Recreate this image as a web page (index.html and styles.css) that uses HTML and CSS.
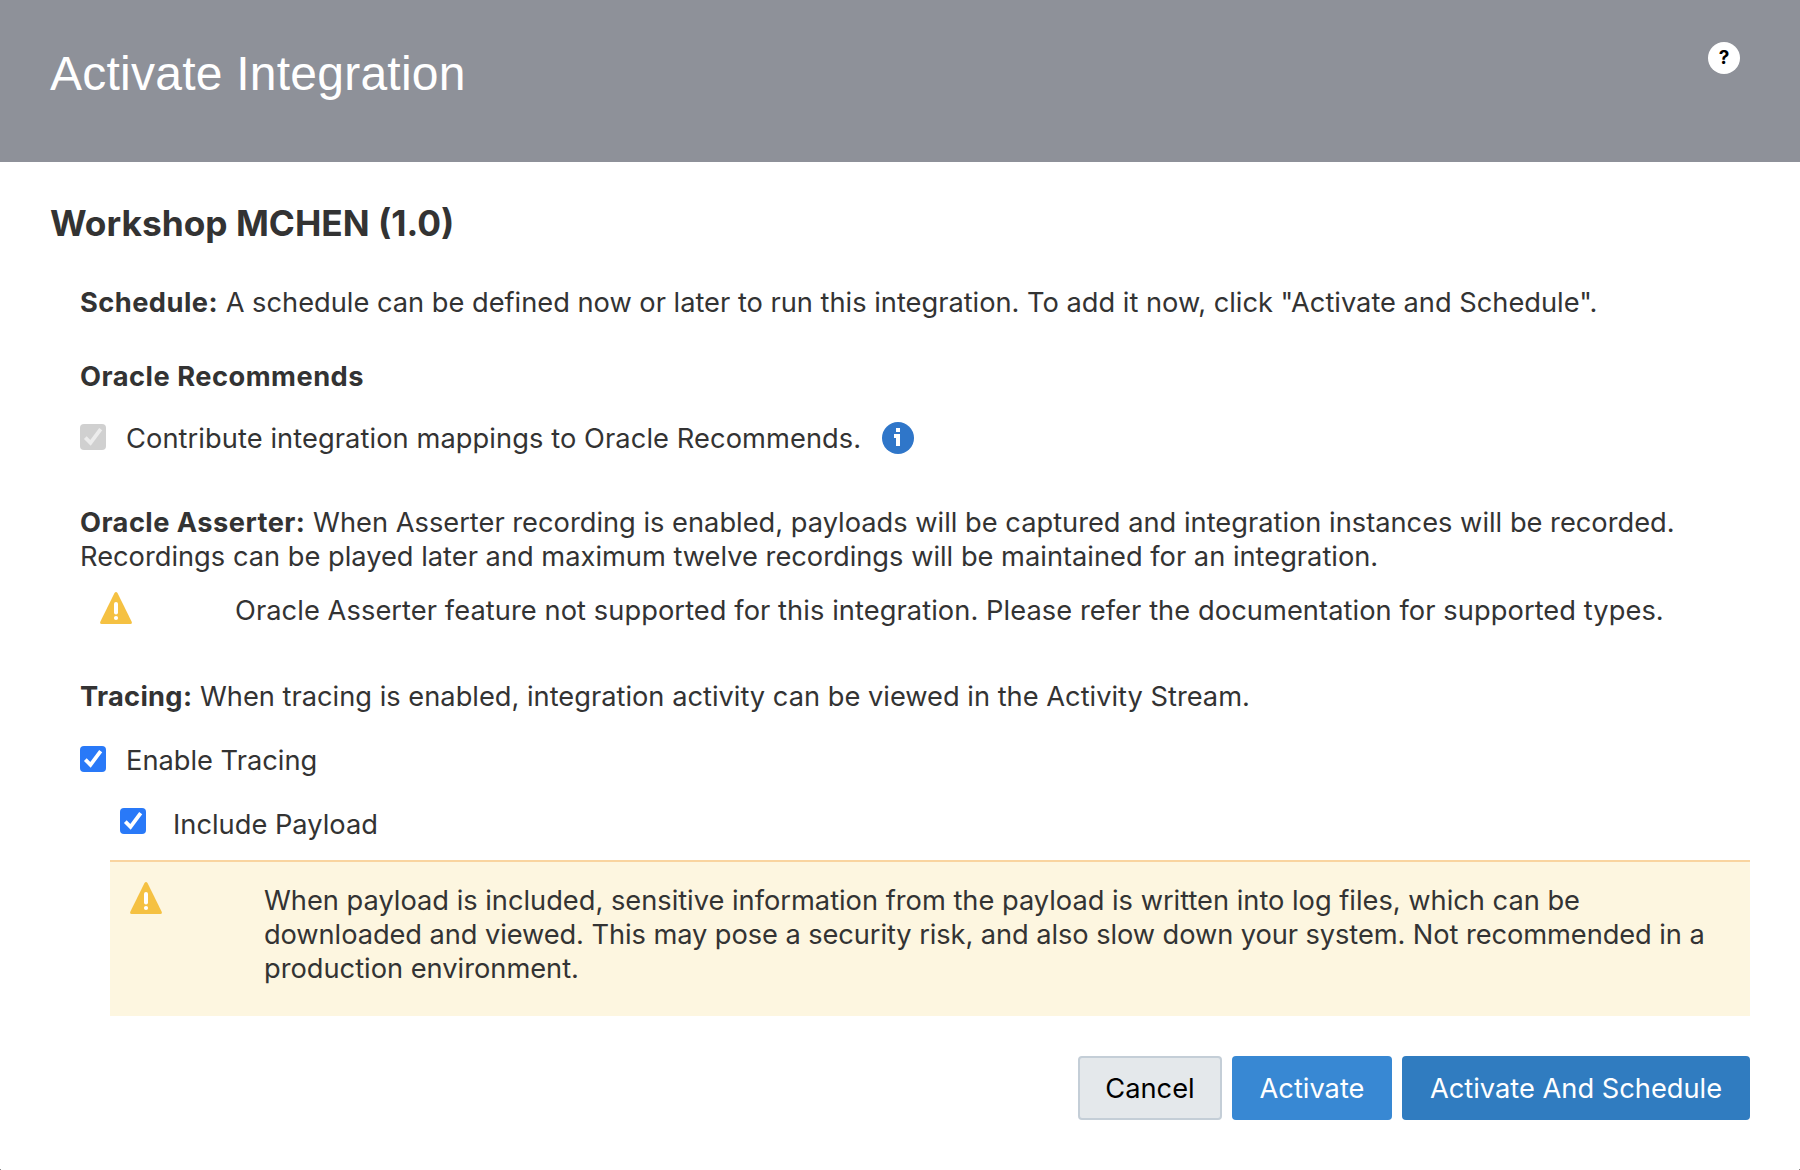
FILE: index.html
```html
<!DOCTYPE html>
<html lang="en">
<head>
<meta charset="utf-8">
<title>Activate Integration</title>
<link rel="stylesheet" href="styles.css">
</head>
<body>
<svg class="defs" width="0" height="0" aria-hidden="true">
  <symbol id="warning" viewBox="0 0 32 32">
    <path fill="#f5c142" d="M14.5 1Q16 -1 17.5 1L31.7 29.7Q32.4 32 30.4 32H1.6Q-.4 32 .3 29.7Z"/>
    <rect class="mark" x="14" y="10" width="4" height="12.4" rx="2"/>
    <circle class="mark" cx="16" cy="26" r="2.1"/>
  </symbol>
  <symbol id="check" viewBox="0 0 26 26">
    <path fill="none" stroke="currentColor" stroke-width="3.8" d="M5.3 13.6L10.5 18.8L20.7 5.2"/>
  </symbol>
</svg>
<main class="dialog">
  <header class="dialog-header">
    <h1 class="title">Activate Integration</h1>
    <button class="help" aria-label="Help">?</button>
  </header>
  <section class="content">
    <h2 class="name">Workshop MCHEN (1.0)</h2>
    <p class="text schedule"><b>Schedule:</b> A schedule can be defined now or later to run this integration. To add it now, click "Activate and Schedule".</p>
    <h3 class="text recommends">Oracle Recommends</h3>
    <div class="option contribute">
      <svg class="checkbox disabled"><use href="#check"/></svg>
      <span class="text">Contribute integration mappings to Oracle Recommends.</span>
      <svg class="info" viewBox="0 0 32 32"><circle cx="16" cy="16" r="16" fill="#2f76c9"/><path fill="#fff" d="M14 6h4v4h-4zM12 12h6v12h-4v-8h-2z"/></svg>
    </div>
    <p class="text asserter"><b>Oracle Asserter:</b> When Asserter recording is enabled, payloads will be captured and integration instances will be recorded.<br>Recordings can be played later and maximum twelve recordings will be maintained for an integration.</p>
    <div class="notice">
      <svg class="warning"><use href="#warning"/></svg>
      <p class="text">Oracle Asserter feature not supported for this integration. Please refer the documentation for supported types.</p>
    </div>
    <p class="text tracing"><b>Tracing:</b> When tracing is enabled, integration activity can be viewed in the Activity Stream.</p>
    <div class="option enable">
      <svg class="checkbox"><use href="#check"/></svg>
      <span class="text">Enable Tracing</span>
    </div>
    <div class="option payload">
      <svg class="checkbox"><use href="#check"/></svg>
      <span class="text">Include Payload</span>
    </div>
    <div class="alert">
      <svg class="warning"><use href="#warning"/></svg>
      <p class="text">When payload is included, sensitive information from the payload is written into log files, which can be<br><span class="tight">downloaded and viewed. This may pose a security risk, and also slow down your system. Not recommended in a</span><br>production environment.</p>
    </div>
  </section>
  <footer class="actions">
    <button class="btn cancel">Cancel</button>
    <button class="btn activate">Activate</button>
    <button class="btn primary">Activate And Schedule</button>
  </footer>
</main>
</body>
</html>
```
FILE: styles.css
```css
* { box-sizing: border-box; margin: 0; padding: 0; }
body { background: #fff; color: #333; font-family: Inter, "Liberation Sans", sans-serif; }
svg { display: block; flex: none; }
.defs { position: absolute; }
.dialog {
  height: 1170px; overflow: hidden;
  background:
    linear-gradient(#888, #888) left bottom / 1px 1px no-repeat,
    linear-gradient(#888, #888) right bottom / 1px 1px no-repeat;
}
.dialog-header {
  display: flex; justify-content: space-between; align-items: flex-start;
  height: 162px; padding: 42px 60px 0 50px; background: #8e9199; color: #fff;
}
.title { font: 400 48px/64px "Liberation Sans", Arial, sans-serif; letter-spacing: .24px; white-space: nowrap; }
.help {
  width: 32px; height: 32px; border: 0; border-radius: 50%; background: #fff; color: #000;
  font: 700 19px/32px Inter, sans-serif;
}
.content { padding: 0 50px 0 80px; }
.name { margin: 40px 0 0 -30px; font-size: 35.3px; line-height: 44px; font-weight: 700; white-space: nowrap; }
.text { font-size: 27.25px; line-height: 34px; white-space: nowrap; }
.text b { letter-spacing: .45px; }
.schedule { margin-top: 40px; letter-spacing: -.01px; }
.recommends { margin-top: 40px; font-weight: 700; letter-spacing: .5px; }
.option { display: flex; gap: 20px; height: 34px; }
.checkbox { width: 26px; height: 26px; border-radius: 4px; background: #2979f8; color: #fff; }
.checkbox.disabled { background: #d0d0d0; color: #ececec; }
.contribute { margin-top: 28px; letter-spacing: .08px; }
.contribute .checkbox { margin-top: 2px; }
.info { width: 32px; height: 32px; margin-left: 1px; }
.asserter { margin-top: 50px; }
.notice { display: flex; gap: 103px; margin-top: 20px; padding-left: 20px; letter-spacing: .07px; }
.warning { width: 32px; height: 32px; }
.mark { fill: #fff; }
.notice .warning { margin-top: -2px; }
.tracing { margin-top: 52px; }
.tracing b { letter-spacing: .3px; }
.enable { margin-top: 30px; }
.enable .checkbox { margin-top: 2px; }
.payload { margin-top: 30px; margin-left: 40px; gap: 27px; }
.alert {
  display: flex; gap: 102px; height: 156px; margin: 18px 0 0 30px; padding: 20px;
  border-top: 2px solid #f9d4a0; background: #fdf6e0;
}
.alert .text { margin-top: 2px; letter-spacing: -.01px; }
.alert .tight { letter-spacing: -.08px; }
.actions { display: flex; justify-content: flex-end; gap: 10px; margin-top: 40px; padding-right: 50px; }
.btn {
  height: 64px; padding-top: 2px; border: 0; border-radius: 4px; color: #fff;
  font: 400 27.25px/62px Inter, sans-serif; white-space: nowrap;
}
.cancel { width: 144px; border: 2px solid #c4ced7; background: #e4e8eb; color: #000; line-height: 58px; }
.activate { width: 160px; background: #3888d3; }
.primary { width: 348px; background: #307cc0; }
```
